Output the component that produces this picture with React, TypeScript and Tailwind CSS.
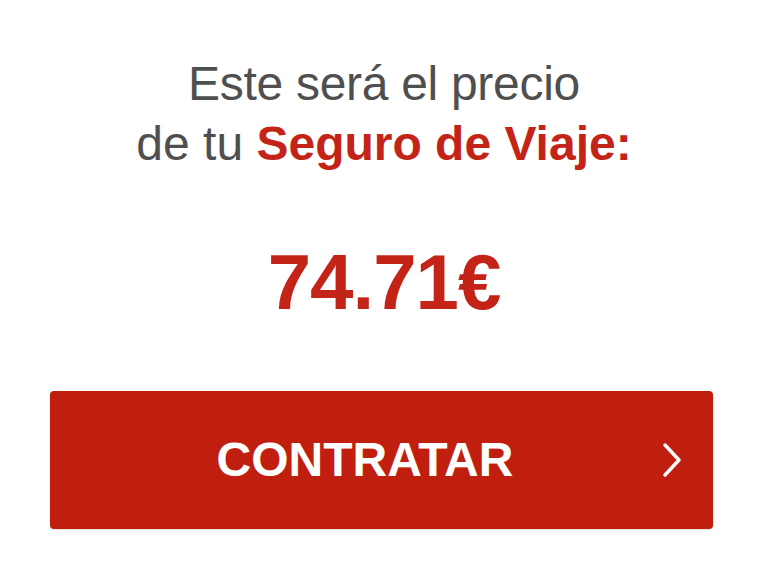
export default function App() {
  return (
    <div className="min-h-[580px] w-full bg-white font-['Liberation_Sans',Arial,sans-serif]">
      <div className="flex flex-col items-center pt-[54px]">
        <h1 className="text-center text-[48px] leading-[60px] text-[#4f4f4f]">
          <span className="tracking-[-0.3px]">Este será el precio</span>
          <br />
          de tu <span className="font-bold text-[#c42418]">Seguro de Viaje:</span>
        </h1>

        <p className="mt-[69px] text-[78px] leading-none font-bold tracking-[-1px] text-[#c42418]">
          74.71€
        </p>
      </div>

      <div className="mt-[70px] pl-[50px]">
        <button className="relative flex h-[138px] w-[663px] items-center rounded-[4px] bg-[#c01f0f] pr-[33px] text-white shadow-sm">
          <span className="flex-1 text-center text-[48px] font-bold leading-none">
            CONTRATAR
          </span>
          <svg
            className="absolute right-[30px] top-1/2 -translate-y-1/2"
            width="22"
            height="36"
            viewBox="0 0 22 36"
            fill="none"
          >
            <path
              d="M4 3 L18 18 L4 33"
              stroke="white"
              strokeWidth="3.5"
              strokeLinecap="round"
              strokeLinejoin="round"
            />
          </svg>
        </button>
      </div>
    </div>
  );
}
